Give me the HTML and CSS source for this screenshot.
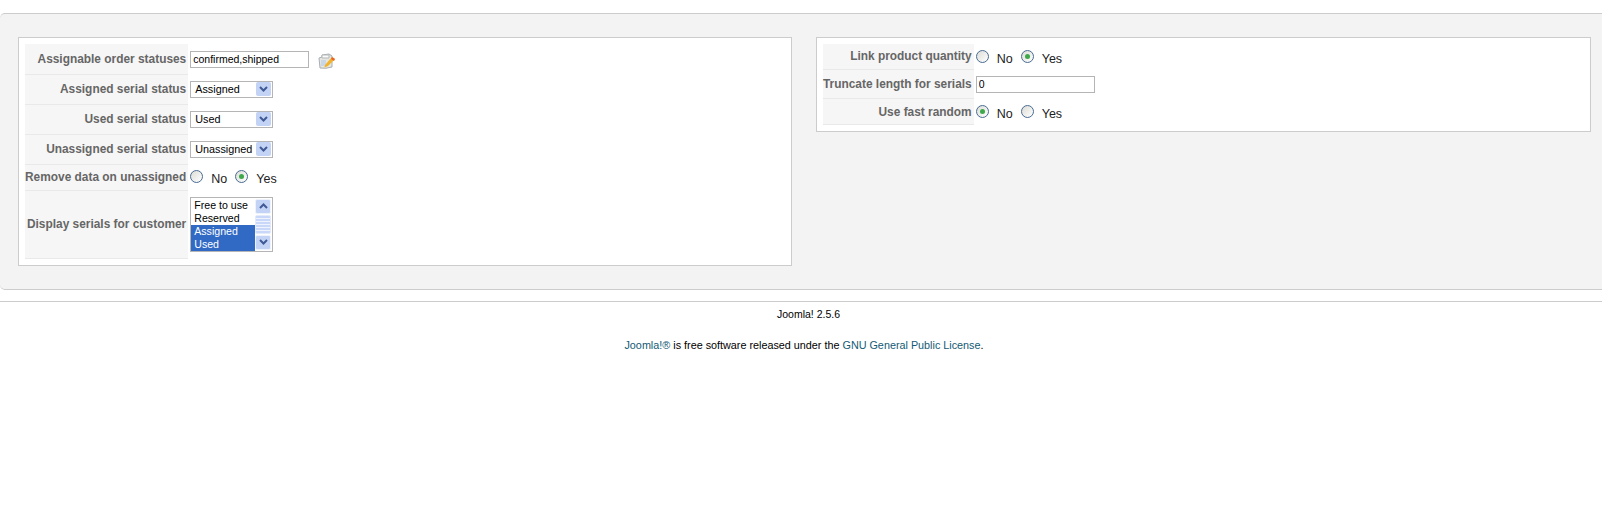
FILE: index.html
```html
<!DOCTYPE html>
<html lang="en">
<head>
  <meta charset="UTF-8" />
  <title>Serial configuration - Joomla! Administration</title>
  <link rel="stylesheet" href="styles.css">
</head>
<body>

<div class="element-box">
  <div class="config-col">
    <table class="admintable">
      <tr class="row-a">
        <td class="key">Assignable order statuses</td>
        <td>
          <div class="field">
            <input class="text-input text-wide" type="text" value="confirmed,shipped">
            <svg class="edit-icon" width="18" height="16" viewBox="0 0 18 16">
              <path d="M1 5 L4 4 L4 2 L11 1 L14 3 L14 14 Q8 16 2 15 Z" fill="#e6e6e0" stroke="#a9aeb4" stroke-width="1"/>
              <path d="M4 2 H11 V5 H4 Z" fill="#fafafa" stroke="#b5b8b8" stroke-width="1"/>
              <path d="M3 7 H8 V13 H3 Z" fill="#c8d6e8"/>
              <path d="M7 12 L14 4 L17 6 L10 13 L6.5 14.5 Z" fill="#f2b32c"/>
              <path d="M14 4 L17 6 L16 8 L13 6 Z" fill="#e8632a"/>
            </svg>
          </div>
        </td>
      </tr>
      <tr class="row-a">
        <td class="key">Assigned serial status</td>
        <td><div class="select-box"><span>Assigned</span><i class="arrow-btn"><svg width="9" height="6" viewBox="0 0 9 6"><path d="M1 1 L4.5 4.5 L8 1" fill="none" stroke="#3f5a94" stroke-width="2"/></svg></i></div></td>
      </tr>
      <tr class="row-a">
        <td class="key">Used serial status</td>
        <td><div class="select-box"><span>Used</span><i class="arrow-btn"><svg width="9" height="6" viewBox="0 0 9 6"><path d="M1 1 L4.5 4.5 L8 1" fill="none" stroke="#3f5a94" stroke-width="2"/></svg></i></div></td>
      </tr>
      <tr class="row-a">
        <td class="key">Unassigned serial status</td>
        <td><div class="select-box"><span>Unassigned</span><i class="arrow-btn"><svg width="9" height="6" viewBox="0 0 9 6"><path d="M1 1 L4.5 4.5 L8 1" fill="none" stroke="#3f5a94" stroke-width="2"/></svg></i></div></td>
      </tr>
      <tr class="row-b">
        <td class="key">Remove data on unassigned</td>
        <td>
          <div class="radios">
            <i class="radio"></i><span class="radio-label">No</span>
            <i class="radio checked"></i><span class="radio-label">Yes</span>
          </div>
        </td>
      </tr>
      <tr class="row-c">
        <td class="key">Display serials for customer</td>
        <td>
          <div class="list-box">
            <ul class="list-items">
              <li>Free to use</li>
              <li>Reserved</li>
              <li class="selected">Assigned</li>
              <li class="selected">Used</li>
            </ul>
            <div class="list-scroll">
              <i class="scroll-btn"><svg width="9" height="6" viewBox="0 0 9 6"><path d="M1 5 L4.5 1.5 L8 5" fill="none" stroke="#3f5a94" stroke-width="2"/></svg></i>
              <i class="scroll-thumb"></i>
              <i class="scroll-btn"><svg width="9" height="6" viewBox="0 0 9 6"><path d="M1 1 L4.5 4.5 L8 1" fill="none" stroke="#3f5a94" stroke-width="2"/></svg></i>
            </div>
          </div>
        </td>
      </tr>
    </table>
  </div>

  <div class="config-col config-right">
    <table class="admintable">
      <tr class="row-e">
        <td class="key">Link product quantity</td>
        <td>
          <div class="radios">
            <i class="radio"></i><span class="radio-label">No</span>
            <i class="radio checked"></i><span class="radio-label">Yes</span>
          </div>
        </td>
      </tr>
      <tr class="row-d">
        <td class="key">Truncate length for serials</td>
        <td><input class="text-input text-wide" type="text" value="0"></td>
      </tr>
      <tr class="row-f">
        <td class="key">Use fast random</td>
        <td>
          <div class="radios">
            <i class="radio checked"></i><span class="radio-label">No</span>
            <i class="radio"></i><span class="radio-label">Yes</span>
          </div>
        </td>
      </tr>
    </table>
  </div>
</div>

<footer>
  <p class="version">Joomla! 2.5.6</p>
  <p class="license"><a href="#">Joomla!®</a> is free software released under the <a href="#">GNU General Public License</a>.</p>
</footer>

</body>
</html>
```

FILE: styles.css
```css
* {
  box-sizing: border-box;
}

body {
  margin: 0;
  background: #fff;
  font-family: "Liberation Sans", Arial, sans-serif;
  font-size: 11px;
  color: #000;
}

.element-box {
  display: flex;
  align-items: flex-start;
  gap: 24px;
  margin-top: 13px;
  height: 277px;
  padding: 23px 11px 0 18px;
  background: #f3f3f3;
  border-top: 1px solid #ccc;
  border-bottom: 1px solid #ccc;
  border-radius: 5px 0 0 5px;
}

.config-col {
  width: 774px;
  padding: 6px;
  background: #fff;
  border: 1px solid #ccc;
}

.config-right {
  width: 775px;
}

.admintable {
  border-collapse: collapse;
}

.admintable td {
  padding: 0 0 0 2px;
}

.admintable td.key {
  padding: 0 2px 0 0;
  background: #f6f6f6;
  border-bottom: 1px solid #e9e9e9;
  color: #666;
  font-weight: bold;
  font-size: 11.9px;
  text-align: right;
  white-space: nowrap;
}

.row-a td {
  height: 30px;
}

.row-b td {
  height: 26px;
}

.row-c td {
  height: 68px;
}

.admintable .row-d td {
  height: 29px;
  padding-top: 1px;
}

.admintable .row-e td {
  height: 25px;
}

.admintable .row-e td:last-child {
  padding-top: 1px;
}

.admintable .row-f td {
  height: 26px;
  padding-top: 2px;
}

.field {
  display: flex;
  align-items: center;
  gap: 9px;
}

.text-input {
  display: block;
  height: 17px;
  padding: 0 2px;
  background: #fff;
  border: 1px solid #b5b5b5;
  font-family: "Liberation Sans", Arial, sans-serif;
  font-size: 10.5px;
  color: #000;
}

.text-wide {
  width: 119px;
}

.edit-icon {
  display: block;
  margin-top: 3px;
}

.select-box {
  display: flex;
  justify-content: space-between;
  align-items: center;
  width: 83px;
  height: 17px;
  padding: 0 1px 0 4px;
  background: #fff;
  border: 1px solid #b5b5b5;
  font-size: 10.8px;
}

.arrow-btn {
  display: flex;
  justify-content: center;
  align-items: center;
  flex: none;
  width: 15px;
  height: 14px;
  background: #c3d3f5;
  border-radius: 2px;
}

.arrow-btn svg,
.scroll-btn svg {
  display: block;
}

.radios {
  display: flex;
  align-items: center;
}

.radio {
  display: flex;
  justify-content: center;
  align-items: center;
  width: 13px;
  height: 13px;
  margin-bottom: 2px;
  background: linear-gradient(135deg, #dcdcd6, #fff);
  border: 1px solid #4a6c94;
  border-radius: 50%;
}

.radio.checked::after {
  content: "";
  width: 5px;
  height: 5px;
  background: #3fa84c;
  border-radius: 50%;
}

.radio-label {
  width: 32px;
  padding: 3px 0 0 8px;
  font-size: 12.5px;
  color: #222;
}

.list-box {
  display: flex;
  width: 83px;
  height: 55px;
  padding: 1px 1px 1px 0;
  background: #fff;
  border: 1px solid #b5b5b5;
}

.list-items {
  flex: 1;
  min-width: 0;
  margin: 0;
  padding: 0;
  list-style: none;
}

.list-items li {
  height: 13px;
  padding-left: 3px;
  font-size: 10.6px;
  line-height: 13px;
  white-space: nowrap;
}

.list-items li.selected {
  background: #316ac5;
  color: #fff;
}

.list-scroll {
  display: flex;
  flex-direction: column;
  gap: 1px;
  width: 16px;
}

.scroll-btn {
  display: flex;
  justify-content: center;
  align-items: center;
  height: 15px;
  background: #c3d3f5;
  border: 1px solid #eef2fb;
  border-radius: 2px;
}

.scroll-thumb {
  flex: 1;
  background: repeating-linear-gradient(#c9d8f8 0, #c9d8f8 2px, #eef3fd 2px, #eef3fd 3px);
  border: 1px solid #e3eafa;
  border-radius: 2px;
}

footer {
  margin-top: 11px;
  padding: 6px 0 0 6px;
  border-top: 1px solid #ccc;
  font-size: 10.8px;
  text-align: center;
}

.version {
  margin: 0;
  padding-left: 9px;
  font-size: 10.5px;
  line-height: 13px;
}

.license {
  margin: 18px 0 0;
  line-height: 13px;
}

.license a {
  color: #135a74;
  text-decoration: none;
}
```
